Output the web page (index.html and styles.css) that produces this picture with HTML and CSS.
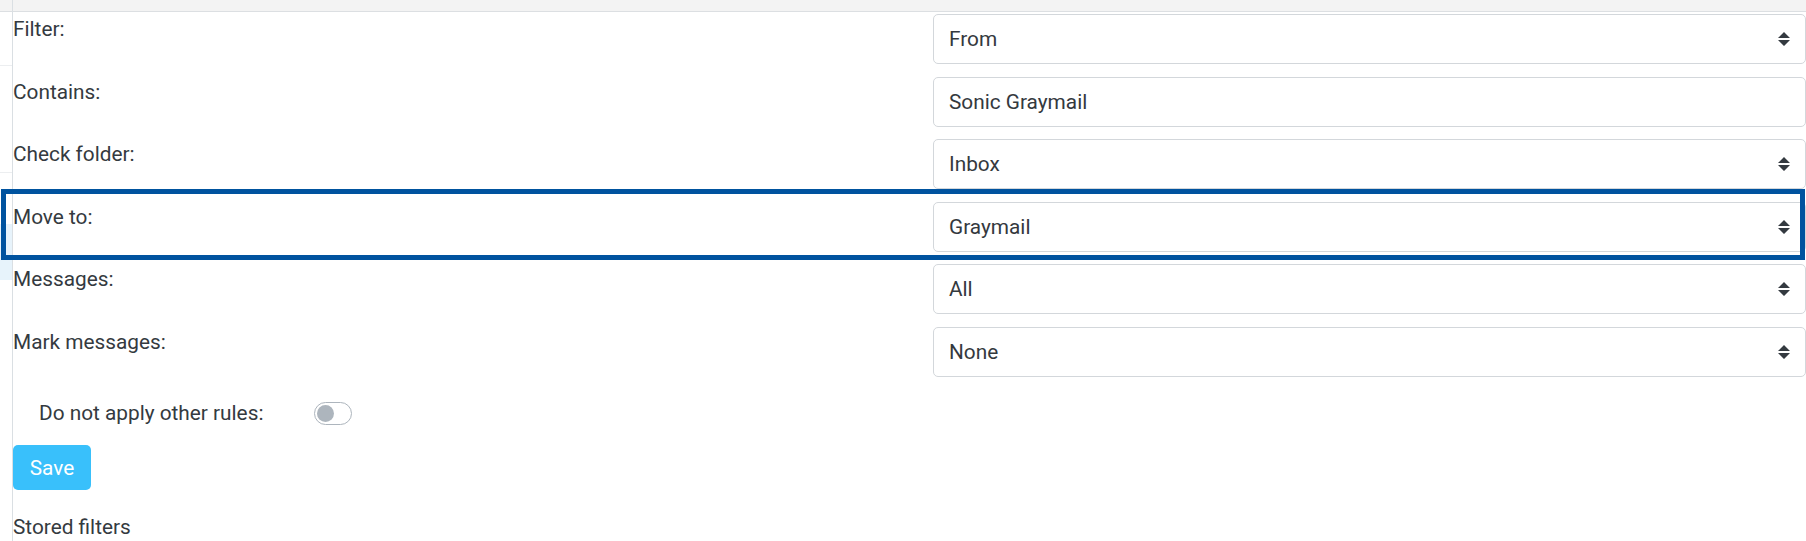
FILE: index.html
```html
<!DOCTYPE html>
<html lang="en">
<head>
<meta charset="utf-8">
<title>Filter</title>
<link rel="stylesheet" href="styles.css">
</head>
<body>
<div class="app">
  <aside class="sidebar">
    <div class="side-top"></div>
    <div class="side-item side-item-a"></div>
    <div class="side-item side-item-b"></div>
    <div class="side-gap"></div>
    <div class="side-active"></div>
  </aside>
  <main class="main">
    <div class="topbar"></div>
    <form class="form">
      <div class="row">
        <div class="label">Filter:</div>
        <div class="select"><span>From</span><svg class="caret" width="12" height="14" viewBox="0 0 12 14"><path d="M0 6 L6 0 L12 6 Z M0 8 L12 8 L6 14 Z" fill="#343a40"/></svg></div>
      </div>
      <div class="row">
        <div class="label">Contains:</div>
        <div class="select input"><span>Sonic Graymail</span></div>
      </div>
      <div class="row">
        <div class="label">Check folder:</div>
        <div class="select"><span>Inbox</span><svg class="caret" width="12" height="14" viewBox="0 0 12 14"><path d="M0 6 L6 0 L12 6 Z M0 8 L12 8 L6 14 Z" fill="#343a40"/></svg></div>
      </div>
      <div class="row row-highlight">
        <div class="label">Move to:</div>
        <div class="select"><span>Graymail</span><svg class="caret" width="12" height="14" viewBox="0 0 12 14"><path d="M0 6 L6 0 L12 6 Z M0 8 L12 8 L6 14 Z" fill="#343a40"/></svg></div>
        <div class="highlight"></div>
      </div>
      <div class="row">
        <div class="label">Messages:</div>
        <div class="select"><span>All</span><svg class="caret" width="12" height="14" viewBox="0 0 12 14"><path d="M0 6 L6 0 L12 6 Z M0 8 L12 8 L6 14 Z" fill="#343a40"/></svg></div>
      </div>
      <div class="row">
        <div class="label">Mark messages:</div>
        <div class="select"><span>None</span><svg class="caret" width="12" height="14" viewBox="0 0 12 14"><path d="M0 6 L6 0 L12 6 Z M0 8 L12 8 L6 14 Z" fill="#343a40"/></svg></div>
      </div>
      <div class="toggle-row">
        <span class="toggle-label">Do not apply other rules:</span>
        <span class="switch"><span class="knob"></span></span>
      </div>
      <div class="actions">
        <button type="button" class="btn-save">Save</button>
      </div>
      <div class="stored">Stored filters</div>
    </form>
  </main>
</div>
</body>
</html>
```

FILE: styles.css
```css
* { box-sizing: border-box; }

html, body {
  margin: 0;
  padding: 0;
  background: #ffffff;
}

body {
  font-family: Roboto, "Liberation Sans", Arial, sans-serif;
  font-size: 20.8px;
  line-height: 30px;
  color: #343a40;
  overflow: hidden;
  height: 541px;
}

.app {
  display: grid;
  grid-template-columns: 13px 1fr;
  height: 541px;
}

.sidebar {
  border-right: 1px solid #dadfe3;
  display: flex;
  flex-direction: column;
}

.side-top {
  height: 12px;
  background: #f3f3f3;
  border-bottom: 1px solid #dcdfe2;
}

.side-item {
  border-bottom: 1px solid #eceef0;
}

.side-item-a { height: 54px; }
.side-item-b { height: 107px; }
.side-gap { height: 51px; }

.side-active {
  height: 56px;
  background: #e7f3fb;
}

.main {
  display: flex;
  flex-direction: column;
  min-width: 0;
}

.topbar {
  height: 12px;
  background: #f3f3f3;
  border-bottom: 1px solid #dcdfe2;
}

.form {
  padding-top: 2px;
  display: flex;
  flex-direction: column;
}

.row {
  display: grid;
  grid-template-columns: 920px 1fr;
  margin-bottom: 12.5px;
  position: relative;
}

.label {
  line-height: 30px;
}

.select {
  height: 50px;
  border: 1px solid #d3d7db;
  border-radius: 5px;
  padding: 0 15px 0 15px;
  display: flex;
  align-items: center;
  justify-content: space-between;
  color: #34393e;
  background: #fff;
}

.caret {
  display: block;
  flex: none;
}

.row-highlight .highlight {
  position: absolute;
  left: -12px;
  right: 1px;
  top: -12.5px;
  bottom: -8.5px;
  border: 5px solid #00539f;
  pointer-events: none;
}

.toggle-row {
  display: flex;
  align-items: center;
  margin-top: 9px;
  padding-left: 26px;
  height: 30px;
}

.toggle-label {
  width: 275px;
  flex: none;
}

.switch {
  width: 38px;
  height: 23px;
  border: 1px solid #adb5bd;
  border-radius: 12px;
  display: flex;
  align-items: center;
  padding-left: 2px;
  background: #fff;
}

.knob {
  width: 17px;
  height: 17px;
  border-radius: 50%;
  background: #adb5bd;
}

.actions {
  margin-top: 17px;
}

.btn-save {
  font-family: Roboto, "Liberation Sans", Arial, sans-serif;
  font-size: 20.8px;
  line-height: 30px;
  color: #ffffff;
  background: #39c0fb;
  border: none;
  border-radius: 5px;
  padding: 7.5px 0;
  width: 78px;
  height: 45px;
  cursor: pointer;
}

.stored {
  margin-top: 22px;
  line-height: 30px;
}
```
